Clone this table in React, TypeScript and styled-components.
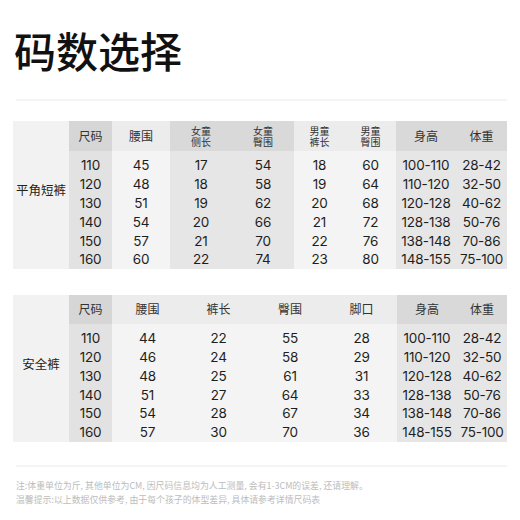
import styled, { createGlobalStyle } from 'styled-components'

const GlobalStyle = createGlobalStyle`
  html, body {
    margin: 0;
    padding: 0;
    background: #fff;
  }
  body {
    font-family: Inter, "Noto Sans CJK SC", sans-serif;
    color: #1e1e1e;
  }
`

const Page = styled.div`
  width: 520px;
  height: 520px;
  padding: 22px 13px 0 13px;
  box-sizing: border-box;
  overflow: hidden;
`

const Title = styled.h1`
  margin: 0 0 0 1px;
  font-family: "Noto Sans CJK SC", sans-serif;
  font-size: 42px;
  font-weight: 500;
  line-height: 56px;
  color: #111;
`

const Divider = styled.div<{ $gap: number }>`
  height: 2px;
  margin: ${(p) => p.$gap}px 0 0 3px;
  background: #f4f4f4;
`

const Table = styled.div<{ $top: number }>`
  display: flex;
  width: 494px;
  margin-top: ${(p) => p.$top}px;
`

const LabelCol = styled.div`
  width: 56px;
  background: #f2f2f2;
  display: flex;
  align-items: center;
  justify-content: center;
  padding-bottom: 10px;
  box-sizing: border-box;
  font-family: "Noto Sans CJK SC", sans-serif;
  font-size: 12.5px;
  color: #222;
`

const tones = {
  dark: { head: '#d6d6d6', body: '#e2e2e2' },
  mid: { head: '#d9d9d9', body: '#e6e6e6' },
  light: { head: '#ececec', body: '#f4f4f4' },
}

type Tone = keyof typeof tones

const Col = styled.div<{ $w: number }>`
  width: ${(p) => p.$w}px;
  display: flex;
  flex-direction: column;
`

const Head = styled.div<{ $tone: Tone; $h: number; $small?: boolean }>`
  height: ${(p) => p.$h}px;
  background: ${(p) => tones[p.$tone].head};
  display: flex;
  align-items: center;
  justify-content: center;
  text-align: center;
  font-family: "Noto Sans CJK SC", sans-serif;
  font-size: ${(p) => (p.$small ? '10px' : '12px')};
  line-height: ${(p) => (p.$small ? '11.5px' : '14px')};
  color: #333;
  white-space: pre-line;
`

const Body = styled.div<{ $tone: Tone }>`
  flex: 1;
  background: ${(p) => tones[p.$tone].body};
  padding-top: 5px;
`

const Cell = styled.div`
  height: 18.8px;
  display: flex;
  align-items: center;
  justify-content: center;
  font-size: 13.5px;
  color: #1e1e1e;
  letter-spacing: -0.2px;
`

const Notes = styled.div`
  margin: 12px 0 0 3px;
  font-family: "Noto Sans CJK SC", sans-serif;
  font-size: 8.9px;
  line-height: 14px;
  color: #bcbcbc;
`

type Column = { title: string; w: number; tone: Tone; small?: boolean; values: string[] }

const sizes = ['110', '120', '130', '140', '150', '160']
const heights = ['100-110', '110-120', '120-128', '128-138', '138-148', '148-155']
const weights = ['28-42', '32-50', '40-62', '50-76', '70-86', '75-100']

const shorts: Column[] = [
  { title: '尺码', w: 43, tone: 'dark', values: sizes },
  { title: '腰围', w: 58, tone: 'light', values: ['45', '48', '51', '54', '57', '60'] },
  { title: '女童\n侧长', w: 62, tone: 'mid', small: true, values: ['17', '18', '19', '20', '21', '22'] },
  { title: '女童\n臀围', w: 62, tone: 'mid', small: true, values: ['54', '58', '62', '66', '70', '74'] },
  { title: '男童\n裤长', w: 51, tone: 'light', small: true, values: ['18', '19', '20', '21', '22', '23'] },
  { title: '男童\n臀围', w: 51, tone: 'light', small: true, values: ['60', '64', '68', '72', '76', '80'] },
  { title: '身高', w: 60, tone: 'mid', values: heights },
  { title: '体重', w: 51, tone: 'mid', values: weights },
]

const safety: Column[] = [
  { title: '尺码', w: 43, tone: 'dark', values: sizes },
  { title: '腰围', w: 71, tone: 'light', values: ['44', '46', '48', '51', '54', '57'] },
  { title: '裤长', w: 71, tone: 'light', values: ['22', '24', '25', '27', '28', '30'] },
  { title: '臀围', w: 72, tone: 'light', values: ['55', '58', '61', '64', '67', '70'] },
  { title: '脚口', w: 71, tone: 'light', values: ['28', '29', '31', '33', '34', '36'] },
  { title: '身高', w: 60, tone: 'mid', values: heights },
  { title: '体重', w: 50, tone: 'mid', values: weights },
]

const SizeTable = ({ label, columns, top, headH }: { label: string; columns: Column[]; top: number; headH: number }) => (
  <Table $top={top}>
    <LabelCol>{label}</LabelCol>
    {columns.map((c) => (
      <Col key={c.title} $w={c.w}>
        <Head $tone={c.tone} $h={headH} $small={c.small}>
          {c.title}
        </Head>
        <Body $tone={c.tone}>
          {c.values.map((v, i) => (
            <Cell key={i}>{v}</Cell>
          ))}
        </Body>
      </Col>
    ))}
  </Table>
)

export default function App() {
  return (
    <>
      <GlobalStyle />
      <Page>
        <Title>码数选择</Title>
        <Divider $gap={21} />
        <SizeTable label="平角短裤" columns={shorts} top={20} headH={30} />
        <SizeTable label="安全裤" columns={safety} top={26} headH={29} />
        <Divider $gap={23} />
        <Notes>
          注:体重单位为斤, 其他单位为CM, 因尺码信息均为人工测量, 会有1-3CM的误差, 还请理解。
          <br />
          温馨提示:以上数据仅供参考, 由于每个孩子的体型差异, 具体请参考详情尺码表
        </Notes>
      </Page>
    </>
  )
}
